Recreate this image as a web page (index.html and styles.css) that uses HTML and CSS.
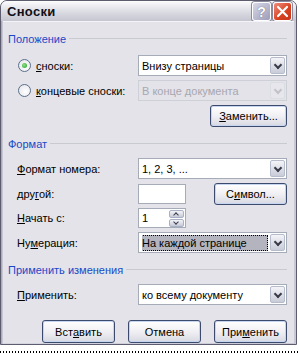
FILE: index.html
```html
<!DOCTYPE html>
<html>
<head>
	<meta charset="utf-8">
	<title>Сноски</title>
	<link rel="stylesheet" href="styles.css">
</head>
<body>
<div class="window">
	<div class="titlebar">
		<span class="title">Сноски</span>
		<div class="caption">
			<span class="cbtn help">?</span>
			<span class="cbtn close">
				<svg width="13" height="13" viewBox="0 0 13 13"><path d="M2 2 L11 11 M11 2 L2 11" stroke="#fff" stroke-width="2.2" stroke-linecap="round"/></svg>
			</span>
		</div>
	</div>
	<div class="client">
		<div class="group-head g1"><span>Положение</span></div>
		<div class="row r-top">
			<label class="radio checked"><i></i><u>с</u>носки:</label>
			<div class="combo"><span class="val">Внизу страницы</span><b class="drop"></b></div>
		</div>
		<div class="row r-next">
			<label class="radio"><i></i><u>к</u>онцевые сноски:</label>
			<div class="combo disabled"><span class="val">В конце документа</span><b class="drop"></b></div>
		</div>
		<div class="row r-btn">
			<span class="btn wide"><u>З</u>аменить...</span>
		</div>

		<div class="group-head g2"><span>Формат</span></div>
		<div class="row r-first">
			<label class="lbl"><u>Ф</u>ормат номера:</label>
			<div class="combo"><span class="val">1, 2, 3, ...</span><b class="drop"></b></div>
		</div>
		<div class="row r-next">
			<label class="lbl">дру<u>г</u>ой:</label>
			<div class="edit short"></div>
			<span class="btn sym">С<u>и</u>мвол...</span>
		</div>
		<div class="row r-next spinrow">
			<label class="lbl"><u>Н</u>ачать с:</label>
			<div class="edit short spin"><span class="val">1</span>
				<span class="spinbtns"><b class="up"></b><b class="down"></b></span>
			</div>
		</div>
		<div class="row r-next">
			<label class="lbl">Ну<u>м</u>ерация:</label>
			<div class="combo focus"><span class="val"><em>На каждой странице</em></span><b class="drop"></b></div>
		</div>

		<div class="group-head g3"><span>Применить изменения</span></div>
		<div class="row r-first">
			<label class="lbl"><u>П</u>рименить:</label>
			<div class="combo"><span class="val">ко всему документу</span><b class="drop"></b></div>
		</div>

		<div class="buttons">
			<span class="btn">Вст<u>а</u>вить</span>
			<span class="btn">Отмена</span>
			<span class="btn">При<u>м</u>енить</span>
		</div>
	</div>
</div>
<div class="doc-strip"></div>
</body>
</html>
```

FILE: styles.css
```css
body{
	margin: 0;
	padding: 0;
	background: #fff;
	font-family: "Liberation Sans", Arial, sans-serif;
	font-size: 11px;
	color: #000;
	overflow: hidden;
}
.window{
	width: 295px;
	height: 343px;
	border: 1px solid #5c5c6e;
	border-radius: 7px 7px 0 0;
	background: linear-gradient(to right, #9d9db0, #d6d6e0 2px, #c9c9d6);
	display: flex;
	flex-direction: column;
	overflow: hidden;
}
.titlebar{
	height: 26px;
	display: flex;
	align-items: center;
	justify-content: space-between;
	padding: 0 4px 0 6px;
	background: linear-gradient(#fdfdfe, #e6e6ec 35%, #d3d3dc 70%, #c6c6d1);
}
.title{
	font-weight: bold;
	font-size: 13px;
	color: #101018;
	letter-spacing: 0.3px;
}
.caption{
	display: flex;
	gap: 2px;
	margin-top: 1px;
}
.cbtn{
	width: 19px;
	height: 19px;
	border: 1px solid #fff;
	border-radius: 3px;
	box-sizing: border-box;
	display: flex;
	align-items: center;
	justify-content: center;
	box-shadow: 0 0 0 1px #8a8a9c;
}
.help{
	background: linear-gradient(135deg, #d8d8e8, #9c9cb8);
	color: #fff;
	font-weight: bold;
	font-size: 14px;
	text-shadow: 0 0 1px #4a4a66;
}
.close{
	background: linear-gradient(135deg, #ef8d7c, #d8401f 60%, #c4361c);
}
.client{
	flex: 1;
	margin: 0 2px 2px 2px;
	background: #e3e3e9;
	border-top: 1px solid #f4f4f8;
	display: flex;
	flex-direction: column;
	padding: 0 7px 0 5px;
}
.group-head{
	display: flex;
	align-items: center;
	height: 13px;
	color: #1a48c8;
}
.group-head::after{
	content: "";
	flex: 1;
	height: 1px;
	background: #c9c9d0;
	margin-left: 3px;
}
.g1{ margin-top: 10px; }
.g2{ margin-top: 10px; }
.g3{ margin-top: 10px; }
.row{
	display: flex;
	align-items: center;
	height: 21px;
	padding-left: 9px;
}
.r-top{ margin-top: 10px; }
.r-first{ margin-top: 8px; }
.r-next{ margin-top: 4px; }
.r-btn{
	margin-top: 4px;
	justify-content: flex-end;
	height: 22px;
}
.lbl, .radio{
	width: 121px;
	flex: none;
	display: flex;
	align-items: center;
	white-space: nowrap;
}
.radio i{
	width: 11px;
	height: 11px;
	border: 1px solid #5b6f8a;
	border-radius: 50%;
	background: radial-gradient(circle at 60% 60%, #fff, #e2e2ea);
	margin: 0 5px 0 1px;
	flex: none;
	position: relative;
}
.radio.checked i::after{
	content: "";
	position: absolute;
	left: 3px;
	top: 3px;
	width: 5px;
	height: 5px;
	border-radius: 50%;
	background: radial-gradient(circle at 40% 40%, #8ee08e, #21a121);
}
.combo{
	flex: 1;
	height: 21px;
	box-sizing: border-box;
	border: 1px solid #a5acb8;
	background: #fff;
	display: flex;
	align-items: center;
	padding: 0 1px 0 3px;
}
.combo .val{
	flex: 1;
	white-space: nowrap;
	overflow: hidden;
}
.drop{
	width: 15px;
	height: 17px;
	box-sizing: border-box;
	border: 1px solid #b6bccc;
	border-radius: 2px;
	background: linear-gradient(#f4f4f8, #c8ccd8);
	position: relative;
}
.drop::after{
	content: "";
	position: absolute;
	left: 4px;
	top: 4px;
	width: 4px;
	height: 4px;
	border-right: 2px solid #3a3a4a;
	border-bottom: 2px solid #3a3a4a;
	transform: rotate(45deg);
}
.combo.disabled{
	border-color: #cdd0d6;
	background: #e3e3e9;
	color: #a7a7b0;
}
.combo.disabled .drop{
	border-color: #dadde2;
	background: #e6e6ec;
}
.combo.disabled .drop::after{
	border-color: #c2c2c8;
}
.combo.focus .val{
	padding-right: 2px;
}
.combo.focus em{
	font-style: normal;
	display: block;
	background: #b4b4bf;
	outline: 1px dotted #000;
	outline-offset: -1px;
	padding: 2px 2px;
	margin-left: -2px;
}
.edit{
	height: 20px;
	box-sizing: border-box;
	border: 1px solid #a5acb8;
	background: #fff;
	display: flex;
	align-items: center;
	padding-left: 3px;
}
.short{ width: 48px; flex: none; }
.spinrow{ height: 20px; }
.spin{ padding-right: 1px; justify-content: space-between; }
.spinbtns{
	display: flex;
	flex-direction: column;
	gap: 1px;
}
.spinbtns b{
	width: 15px;
	height: 8px;
	box-sizing: border-box;
	border: 1px solid #a8b0c4;
	border-radius: 2px;
	background: linear-gradient(#f4f4f8, #c6cad8);
	position: relative;
}
.spinbtns b::after{
	content: "";
	position: absolute;
	left: 4px;
	width: 3px;
	height: 3px;
	border-left: 1.5px solid #3a3a4a;
	border-top: 1.5px solid #3a3a4a;
	transform: rotate(45deg);
	top: 2px;
}
.spinbtns b.down::after{
	transform: rotate(225deg);
	top: 0px;
}
.btn{
	height: 22px;
	box-sizing: border-box;
	border: 1px solid #3c4a6e;
	border-radius: 3px;
	background: linear-gradient(#ffffff, #f0f0f4 50%, #d8d8e2);
	box-shadow: inset 0 0 0 1px #c6d6f0;
	display: flex;
	align-items: center;
	justify-content: center;
	white-space: nowrap;
	width: 73px;
}
.wide{ width: 77px; }
.sym{ margin-left: auto; width: 73px; }
.buttons{
	display: flex;
	justify-content: flex-end;
	gap: 13px;
	margin-top: 15px;
	height: 23px;
}
.buttons .btn{ height: 23px; }
.doc-strip{
	height: 8px;
	margin-top: 1px;
	background:
		repeating-linear-gradient(to right, #000 0 1px, transparent 1px 3px) 0 5px / 100% 3px no-repeat;
}
```
